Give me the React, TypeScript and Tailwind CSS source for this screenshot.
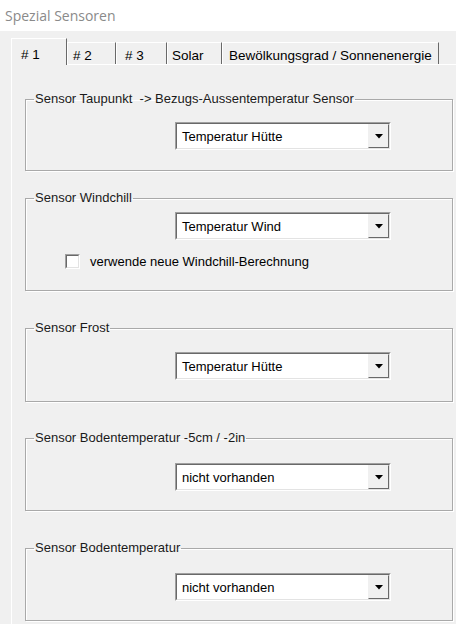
import React from "react";

const font = { fontFamily: '"Liberation Sans", Arial, sans-serif' };

function Select({ value }: { value: string }) {
  return (
    <div className="ml-[149px] w-[216px] h-[28px] border border-t-[#a0a0a0] border-l-[#a0a0a0] border-b-white border-r-white">
      <div className="h-full flex border border-t-[#696969] border-l-[#696969] border-b-[#e3e3e3] border-r-[#e3e3e3] bg-white">
        <div className="flex-1 flex items-center pl-[5px] text-[13px] text-black leading-none">{value}</div>
        <div className="w-[21px] h-full border border-t-[#f0f0f0] border-l-[#f0f0f0] border-b-[#696969] border-r-[#696969] bg-[#f0f0f0] flex items-center justify-center">
          <svg width="8" height="5" viewBox="0 0 8 5">
            <path d="M0 0 H8 L4 4.5 Z" fill="#000" />
          </svg>
        </div>
      </div>
    </div>
  );
}

function Group({
  title,
  h,
  mt,
  children,
}: {
  title: string;
  h: string;
  mt: string;
  children: React.ReactNode;
}) {
  return (
    <fieldset className={`${h} ${mt} w-[428px] border border-[#a9a9a9] shadow-[inset_1px_1px_0_#fff,1px_1px_0_#fff]`}>
      <legend className="ml-[8px] px-[1px] text-[13px] leading-[16px] text-[#1a1a1a] whitespace-pre">{title}</legend>
      {children}
    </fieldset>
  );
}

function Tab({ label, selected, w, pl }: { label: string; selected?: boolean; w: string; pl: string }) {
  if (selected) {
    return (
      <div className={`${w} ${pl} h-[27px] -mb-[1px] relative z-10 bg-[#f0f0f0] border-l border-t border-l-white border-t-white border-r border-r-[#696969] flex items-start pt-[6px] text-[13.5px] whitespace-nowrap text-black`}>
        {label}
      </div>
    );
  }
  return (
    <div className={`${w} ${pl} h-[22px] bg-[#f0f0f0] border-t border-l border-t-white border-l-white border-r border-r-[#696969] flex items-start pt-[3px] text-[13.5px] whitespace-nowrap text-black`}>
      {label}
    </div>
  );
}

export default function App() {
  return (
    <div className="w-[456px] h-[624px] overflow-hidden bg-white" style={font}>
      <div className="h-[31px] pl-[5px] pt-[5px] text-[14px] text-[#8a8a8a]" style={{ fontFamily: '"Open Sans", "Noto Sans", sans-serif' }}>
        Spezial Sensoren
      </div>
      <div className="h-[593px] bg-[#f0f0f0] pl-[11px] pt-[7px]">
        <div className="flex items-end h-[26px]">
          <Tab label="# 1" selected w="w-[56px]" pl="pl-[9px]" />
          <Tab label="# 2" w="w-[49px]" pl="pl-[5px]" />
          <Tab label="# 3" w="w-[51px]" pl="pl-[8px]" />
          <Tab label="Solar" w="w-[55px]" pl="pl-[4px]" />
          <Tab label="Bewölkungsgrad / Sonnenenergie" w="w-[217px]" pl="pl-[6px]" />
        </div>
        <div className="h-[600px] border-l border-t border-white pl-[13px] pt-[26px]">
          <Group title="Sensor Taupunkt  -> Bezugs-Aussentemperatur Sensor" h="h-[80px]" mt="mt-0">
            <div className="mt-[15px]">
              <Select value="Temperatur Hütte" />
            </div>
          </Group>
          <Group title="Sensor Windchill" h="h-[101px]" mt="mt-[19px]">
            <div className="mt-[6px]">
              <Select value="Temperatur Wind" />
            </div>
            <div className="flex items-center mt-[12px] ml-[39px]">
              <div className="w-[15px] h-[15px] border border-t-[#a0a0a0] border-l-[#a0a0a0] border-b-white border-r-white">
                <div className="w-full h-full bg-white border border-t-[#696969] border-l-[#696969] border-b-[#e3e3e3] border-r-[#e3e3e3]" />
              </div>
              <span className="ml-[10px] text-[13px] text-black">verwende neue Windchill-Berechnung</span>
            </div>
          </Group>
          <Group title="Sensor Frost" h="h-[82px]" mt="mt-[29px]">
            <div className="mt-[16px]">
              <Select value="Temperatur Hütte" />
            </div>
          </Group>
          <Group title="Sensor Bodentemperatur -5cm / -2in" h="h-[81px]" mt="mt-[28px]">
            <div className="mt-[17px]">
              <Select value="nicht vorhanden" />
            </div>
          </Group>
          <Group title="Sensor Bodentemperatur" h="h-[81px]" mt="mt-[29px]">
            <div className="mt-[17px]">
              <Select value="nicht vorhanden" />
            </div>
          </Group>
        </div>
      </div>
    </div>
  );
}
